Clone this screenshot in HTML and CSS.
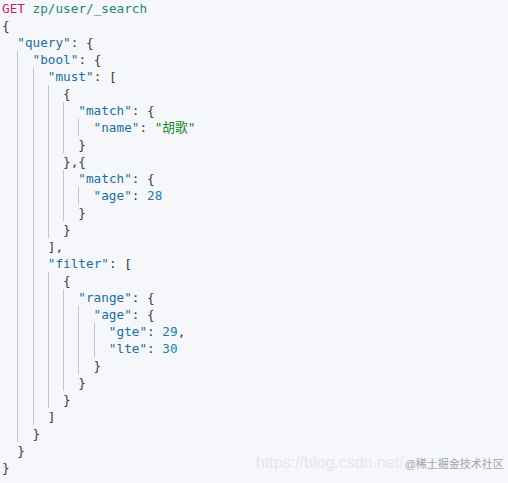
FILE: index.html
```html
<!DOCTYPE html>
<html>
<head>
<meta charset="utf-8">
<link rel="stylesheet" href="styles.css">
</head>
<body>
<div class="editor">
  <div class="ln"><span class="m">GET</span>&nbsp;<span class="u">zp/user/_search</span></div>
  <div class="ln"><span class="p">{</span></div>
  <div class="ln"><span class="i"></span><span class="k">"query"</span><span class="p">: {</span></div>
  <div class="ln"><span class="i"></span><span class="i g"></span><span class="k">"bool"</span><span class="p">: {</span></div>
  <div class="ln"><span class="i"></span><span class="i g"></span><span class="i g"></span><span class="k">"must"</span><span class="p">: [</span></div>
  <div class="ln"><span class="i"></span><span class="i g"></span><span class="i g"></span><span class="i g"></span><span class="p">{</span></div>
  <div class="ln"><span class="i"></span><span class="i g"></span><span class="i g"></span><span class="i g"></span><span class="i g"></span><span class="k">"match"</span><span class="p">: {</span></div>
  <div class="ln"><span class="i"></span><span class="i g"></span><span class="i g"></span><span class="i g"></span><span class="i g"></span><span class="i g"></span><span class="k">"name"</span><span class="p">: </span><span class="s">"胡歌"</span></div>
  <div class="ln"><span class="i"></span><span class="i g"></span><span class="i g"></span><span class="i g"></span><span class="i g"></span><span class="p">}</span></div>
  <div class="ln"><span class="i"></span><span class="i g"></span><span class="i g"></span><span class="i g"></span><span class="p">},{</span></div>
  <div class="ln"><span class="i"></span><span class="i g"></span><span class="i g"></span><span class="i g"></span><span class="i g"></span><span class="k">"match"</span><span class="p">: {</span></div>
  <div class="ln"><span class="i"></span><span class="i g"></span><span class="i g"></span><span class="i g"></span><span class="i g"></span><span class="i g"></span><span class="k">"age"</span><span class="p">: </span><span class="n">28</span></div>
  <div class="ln"><span class="i"></span><span class="i g"></span><span class="i g"></span><span class="i g"></span><span class="i g"></span><span class="p">}</span></div>
  <div class="ln"><span class="i"></span><span class="i g"></span><span class="i g"></span><span class="i g"></span><span class="p">}</span></div>
  <div class="ln"><span class="i"></span><span class="i g"></span><span class="i g"></span><span class="p">],</span></div>
  <div class="ln"><span class="i"></span><span class="i g"></span><span class="i g"></span><span class="k">"filter"</span><span class="p">: [</span></div>
  <div class="ln"><span class="i"></span><span class="i g"></span><span class="i g"></span><span class="i g"></span><span class="p">{</span></div>
  <div class="ln"><span class="i"></span><span class="i g"></span><span class="i g"></span><span class="i g"></span><span class="i g"></span><span class="k">"range"</span><span class="p">: {</span></div>
  <div class="ln"><span class="i"></span><span class="i g"></span><span class="i g"></span><span class="i g"></span><span class="i g"></span><span class="i g"></span><span class="k">"age"</span><span class="p">: {</span></div>
  <div class="ln"><span class="i"></span><span class="i g"></span><span class="i g"></span><span class="i g"></span><span class="i g"></span><span class="i g"></span><span class="i g"></span><span class="k">"gte"</span><span class="p">: </span><span class="n">29</span><span class="p">,</span></div>
  <div class="ln"><span class="i"></span><span class="i g"></span><span class="i g"></span><span class="i g"></span><span class="i g"></span><span class="i g"></span><span class="i g"></span><span class="k">"lte"</span><span class="p">: </span><span class="n">30</span></div>
  <div class="ln"><span class="i"></span><span class="i g"></span><span class="i g"></span><span class="i g"></span><span class="i g"></span><span class="i g"></span><span class="p">}</span></div>
  <div class="ln"><span class="i"></span><span class="i g"></span><span class="i g"></span><span class="i g"></span><span class="i g"></span><span class="p">}</span></div>
  <div class="ln"><span class="i"></span><span class="i g"></span><span class="i g"></span><span class="i g"></span><span class="p">}</span></div>
  <div class="ln"><span class="i"></span><span class="i g"></span><span class="i g"></span><span class="p">]</span></div>
  <div class="ln"><span class="i"></span><span class="i g"></span><span class="p">}</span></div>
  <div class="ln"><span class="i"></span><span class="p">}</span></div>
  <div class="ln"><span class="p">}</span></div>
</div>
<div class="wm"><span class="wm-url">https://blog.csdn.net/</span><span class="wm-tag">@稀土掘金技术社区</span></div>
</body>
</html>
```

FILE: styles.css
```css
html, body {
  margin: 0;
  padding: 0;
  background: #f5f7fa;
}
body {
  width: 508px;
  height: 483px;
  overflow: hidden;
  position: relative;
}
.editor {
  padding: 0 0 0 2px;
  font-family: "DejaVu Sans Mono", "Noto Sans CJK SC", monospace;
  font-size: 12.7px;
  color: #333;
}
.ln {
  display: flex;
  height: 17px;
  line-height: 17px;
  white-space: pre;
}
.i {
  flex: none;
  width: 2ch;
  height: 17px;
}
.g {
  background: linear-gradient(#c3c6cb, #c3c6cb) left top / 1px 100% no-repeat;
}
.m { color: #c4235f; }
.u { color: #1e8679; }
.k { color: #1a6fa0; }
.s { color: #11831f; }
.n { color: #1c7ca6; }
.p { color: #3a3a3a; }
.wm {
  position: absolute;
  left: 256px;
  top: 454px;
  display: flex;
  align-items: center;
  white-space: nowrap;
  font-family: "Liberation Sans", "Noto Sans CJK SC", sans-serif;
}
.wm-url {
  font-size: 16px;
  color: #e6e8ec;
}
.wm-tag {
  margin-left: 1px;
  font-size: 11px;
  color: #9fa3a8;
}
```
